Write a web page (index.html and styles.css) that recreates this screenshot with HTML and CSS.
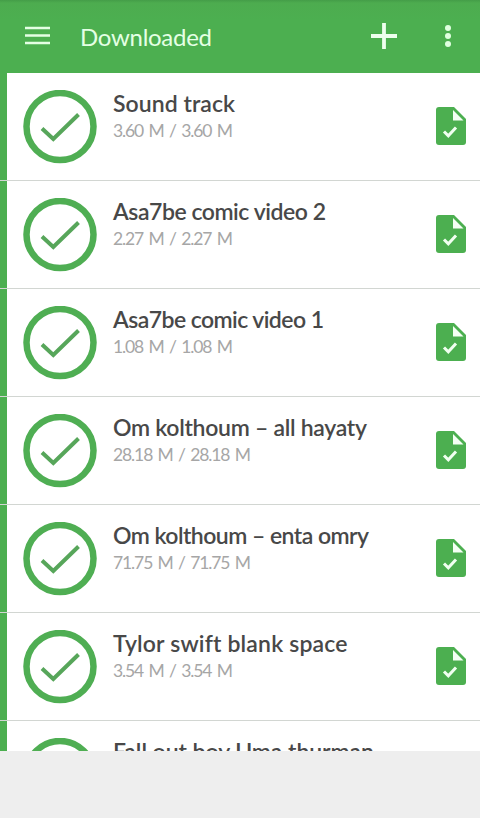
FILE: index.html
```html
<!DOCTYPE html>
<html lang="en">
<head>
<meta charset="utf-8">
<title>Downloaded</title>
<link rel="stylesheet" href="styles.css">
</head>
<body>
<svg class="defs" aria-hidden="true">
  <symbol id="done" viewBox="0 0 74 74">
    <circle cx="37" cy="36.5" r="33.5" fill="none" stroke="#4fae53" stroke-width="6.5"/>
    <path d="M19 38.5 30.3 49 55.5 24.5" fill="none" stroke="#57a65a" stroke-width="4"/>
  </symbol>
  <symbol id="file" viewBox="0 0 30 38">
    <path d="M3 0H18L30 12V35a3 3 0 0 1-3 3H3a3 3 0 0 1-3-3V3a3 3 0 0 1 3-3Z" fill="#4caf50"/>
    <path d="M17 3V13.5H27.5Z" fill="#f4fff4"/>
    <path d="M8 24.5 12.3 28.8 20 20.5" fill="none" stroke="#f0fff0" stroke-width="3"/>
  </symbol>
</svg>
<header class="bar">
  <svg class="menu" viewBox="0 0 26 20"><path d="M1 2H26M1 9.5H26M1 17H26" stroke="#e4ffe4" stroke-width="2.6"/></svg>
  <h1><span class="fit" data-width="132">Downloaded</span></h1>
  <svg class="add" viewBox="0 0 26 26"><path d="M13 0V26M0 13H26" stroke="#eeffee" stroke-width="3.8"/></svg>
  <svg class="more" viewBox="0 0 8 24"><g fill="#e0ffe0"><circle cx="4" cy="4" r="3"/><circle cx="4" cy="12" r="3"/><circle cx="4" cy="20" r="3"/></g></svg>
</header>
<main class="list">
  <article class="row"><svg class="done"><use href="#done"/></svg><div class="info"><h2><span class="fit" data-width="122">Sound track</span></h2><p><span class="fit" data-width="120">3.60 M / 3.60 M</span></p></div><svg class="file"><use href="#file"/></svg></article>
  <article class="row"><svg class="done"><use href="#done"/></svg><div class="info"><h2><span class="fit" data-width="213">Asa7be comic video 2</span></h2><p><span class="fit" data-width="120">2.27 M / 2.27 M</span></p></div><svg class="file"><use href="#file"/></svg></article>
  <article class="row"><svg class="done"><use href="#done"/></svg><div class="info"><h2><span class="fit" data-width="211">Asa7be comic video 1</span></h2><p><span class="fit" data-width="120">1.08 M / 1.08 M</span></p></div><svg class="file"><use href="#file"/></svg></article>
  <article class="row"><svg class="done"><use href="#done"/></svg><div class="info"><h2><span class="fit" data-width="254">Om kolthoum – all hayaty</span></h2><p><span class="fit" data-width="138">28.18 M / 28.18 M</span></p></div><svg class="file"><use href="#file"/></svg></article>
  <article class="row"><svg class="done"><use href="#done"/></svg><div class="info"><h2><span class="fit" data-width="256">Om kolthoum – enta omry</span></h2><p><span class="fit" data-width="138">71.75 M / 71.75 M</span></p></div><svg class="file"><use href="#file"/></svg></article>
  <article class="row"><svg class="done"><use href="#done"/></svg><div class="info"><h2><span class="fit" data-width="234">Tylor swift blank space</span></h2><p><span class="fit" data-width="120">3.54 M / 3.54 M</span></p></div><svg class="file"><use href="#file"/></svg></article>
  <article class="row"><svg class="done"><use href="#done"/></svg><div class="info"><h2><span class="fit" data-width="261">Fall out boy Uma thurman</span></h2></div></article>
</main>
<script src="fit.js"></script>
</body>
</html>
```
FILE: styles.css
```css
* { box-sizing: border-box; }
body {
  margin: 0;
  height: 818px;
  overflow: hidden;
  background: #eee;
  font-family: Lato, "Open Sans", sans-serif;
}
.defs { display: none; }
svg { display: block; flex: none; }
.fit { display: inline-block; white-space: nowrap; }
h1, h2, p { margin: 0; white-space: nowrap; }
.bar {
  display: flex;
  align-items: center;
  height: 73px;
  padding: 0 28px 2px 24px;
  background: linear-gradient(#449d48 0, #4dac4f 3px, #4caf50 20px);
}
.menu { width: 26px; height: 20px; margin-right: 30px; }
h1 {
  flex: 1;
  color: #e4ffe4;
  font-size: 24px;
  font-weight: 400;
  line-height: 30px;
  padding-top: 2px;
}
.add { width: 26px; height: 26px; margin-right: 47px; }
.more { width: 8px; height: 24px; }
.list {
  height: 678px;
  overflow: hidden;
  background: #fff;
}
.row {
  display: flex;
  align-items: flex-start;
  height: 108px;
  padding: 17px 14px 0 23px;
  background: linear-gradient(90deg, #4caf50 7px, #fff 7px);
  border-bottom: 1px solid #d2d6d2;
}
.done { width: 74px; height: 74px; }
.info { flex: 1; margin: -1px 0 0 16px; }
h2 {
  color: #484848;
  font-size: 23px;
  font-weight: 600;
  line-height: 28px;
}
p {
  color: #a6a6a6;
  font-size: 17.5px;
  line-height: 27px;
  word-spacing: 2px;
}
.file { width: 30px; height: 38px; margin-top: 17px; }
```
FILE: fit.js
```js
document.querySelectorAll('.fit').forEach(function (el) {
  var width = el.getBoundingClientRect().width;
  var gap = (Number(el.dataset.width) - width) / (el.textContent.length - 1);
  el.style.letterSpacing = gap.toFixed(3) + 'px';
});
```
